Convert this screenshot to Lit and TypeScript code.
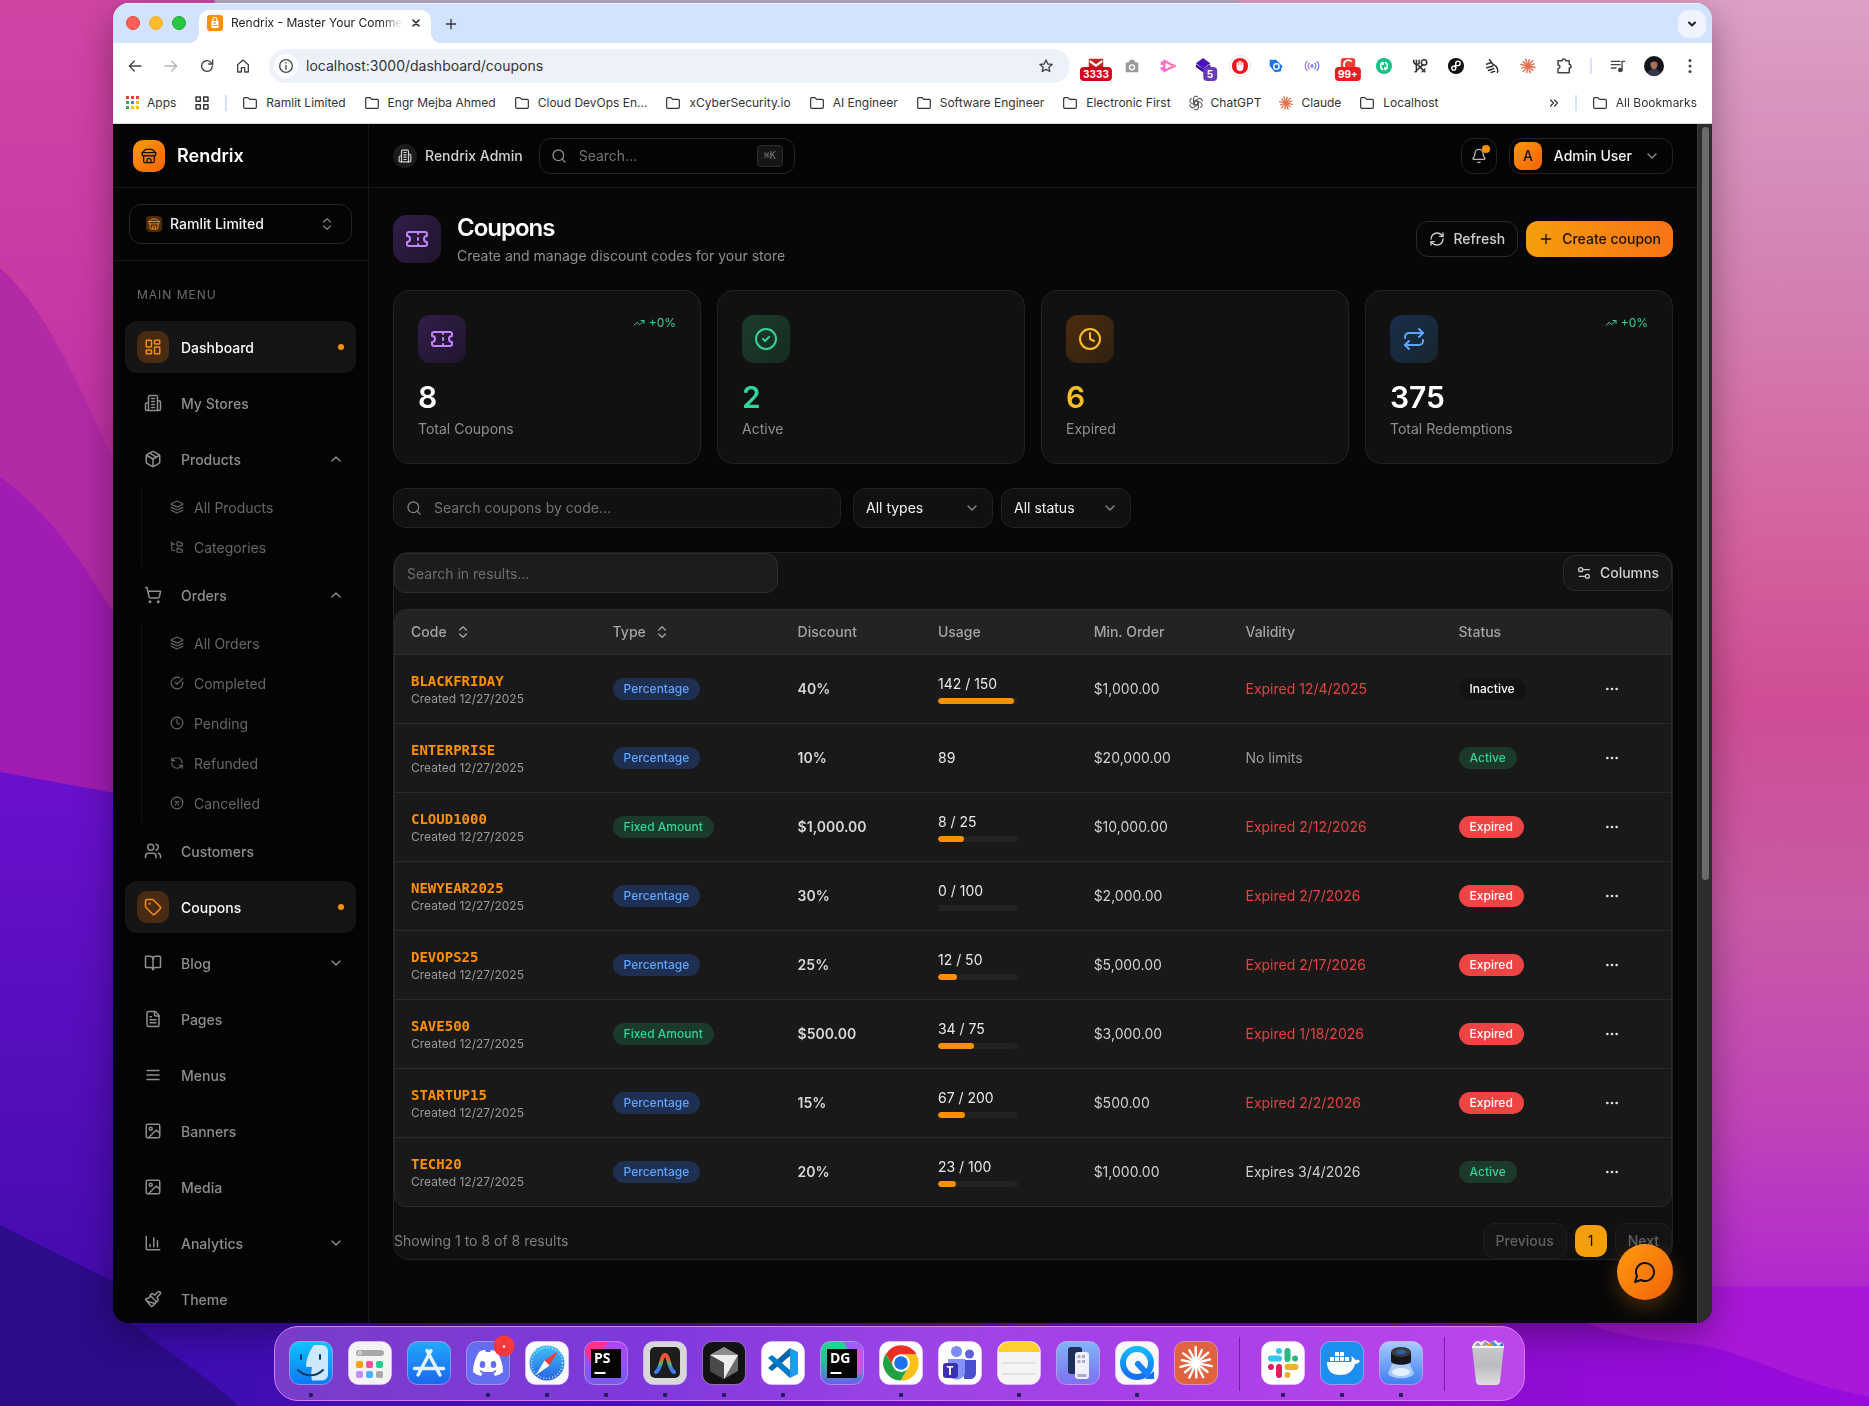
import { LitElement, html, svg, css, nothing } from "lit";
import { customElement, property, state } from "lit/decorators.js";
import { classMap } from "lit/directives/class-map.js";
import { styleMap } from "lit/directives/style-map.js";

/* ---------- line icons (24-unit grid, stroked) ---------- */
const glyphs: Record<string, unknown> = {
  store: svg`<path d="m2 7 4.41-4.41A2 2 0 0 1 7.83 2h8.34a2 2 0 0 1 1.42.59L22 7"/><path d="M4 12v8a2 2 0 0 0 2 2h12a2 2 0 0 0 2-2v-8"/><path d="M15 22v-4a2 2 0 0 0-2-2h-2a2 2 0 0 0-2 2v4"/><path d="M2 7h20"/><path d="M22 7v3a2 2 0 0 1-2 2a2.7 2.7 0 0 1-1.59-.63.7.7 0 0 0-.82 0A2.7 2.7 0 0 1 16 12a2.7 2.7 0 0 1-1.59-.63.7.7 0 0 0-.82 0A2.7 2.7 0 0 1 12 12a2.7 2.7 0 0 1-1.59-.63.7.7 0 0 0-.82 0A2.7 2.7 0 0 1 8 12a2.7 2.7 0 0 1-1.59-.63.7.7 0 0 0-.82 0A2.7 2.7 0 0 1 4 12a2 2 0 0 1-2-2V7"/>`,
  building: svg`<path d="M6 22V4a2 2 0 0 1 2-2h8a2 2 0 0 1 2 2v18Z"/><path d="M6 12H4a2 2 0 0 0-2 2v6a2 2 0 0 0 2 2h2"/><path d="M18 9h2a2 2 0 0 1 2 2v9a2 2 0 0 1-2 2h-2"/><path d="M10 6h4M10 10h4M10 14h4M10 18h4"/>`,
  dashboard: svg`<rect x="3" y="3" width="7" height="9" rx="1"/><rect x="14" y="3" width="7" height="5" rx="1"/><rect x="14" y="12" width="7" height="9" rx="1"/><rect x="3" y="16" width="7" height="5" rx="1"/>`,
  package: svg`<path d="M11 21.73a2 2 0 0 0 2 0l7-4A2 2 0 0 0 21 16V8a2 2 0 0 0-1-1.73l-7-4a2 2 0 0 0-2 0l-7 4A2 2 0 0 0 3 8v8a2 2 0 0 0 1 1.73z"/><path d="M12 22V12"/><path d="M3.29 7 12 12l8.71-5"/><path d="m7.5 4.27 9 5.15"/>`,
  layers: svg`<path d="M12.83 2.18a2 2 0 0 0-1.66 0L2.6 6.08a1 1 0 0 0 0 1.83l8.58 3.91a2 2 0 0 0 1.66 0l8.58-3.9a1 1 0 0 0 0-1.83Z"/><path d="m22 12.65-9.17 4.16a2 2 0 0 1-1.66 0L2 12.65"/><path d="m22 17.65-9.17 4.16a2 2 0 0 1-1.66 0L2 17.65"/>`,
  tree: svg`<path d="M20 10a1 1 0 0 0 1-1V6a1 1 0 0 0-1-1h-2.5a1 1 0 0 1-.8-.4l-.9-1.2A1 1 0 0 0 15 3h-2a1 1 0 0 0-1 1v5a1 1 0 0 0 1 1Z"/><path d="M20 21a1 1 0 0 0 1-1v-3a1 1 0 0 0-1-1h-2.9a1 1 0 0 1-.88-.55l-.42-.85a1 1 0 0 0-.92-.6H13a1 1 0 0 0-1 1v5a1 1 0 0 0 1 1Z"/><path d="M3 5a2 2 0 0 0 2 2h3"/><path d="M3 3v13a2 2 0 0 0 2 2h3"/>`,
  cart: svg`<circle cx="8" cy="21" r="1"/><circle cx="19" cy="21" r="1"/><path d="M2.05 2.05h2l2.66 12.42a2 2 0 0 0 2 1.58h9.78a2 2 0 0 0 1.95-1.57l1.65-7.43H5.12"/>`,
  checkBig: svg`<path d="M21.801 10A10 10 0 1 1 17 3.335"/><path d="m9 11 3 3L22 4"/>`,
  check: svg`<circle cx="12" cy="12" r="10"/><path d="m9 12 2 2 4-4"/>`,
  clock: svg`<circle cx="12" cy="12" r="10"/><path d="M12 6v6l4 2"/>`,
  refreshCcw: svg`<path d="M21 12a9 9 0 0 0-9-9 9.75 9.75 0 0 0-6.74 2.74L3 8"/><path d="M3 3v5h5"/><path d="M3 12a9 9 0 0 0 9 9 9.75 9.75 0 0 0 6.74-2.74L21 16"/><path d="M16 16h5v5"/>`,
  refreshCw: svg`<path d="M3 12a9 9 0 0 1 9-9 9.75 9.75 0 0 1 6.74 2.74L21 8"/><path d="M21 3v5h-5"/><path d="M21 12a9 9 0 0 1-9 9 9.75 9.75 0 0 1-6.74-2.74L3 16"/><path d="M8 16H3v5"/>`,
  circleX: svg`<circle cx="12" cy="12" r="10"/><path d="m15 9-6 6M9 9l6 6"/>`,
  users: svg`<path d="M16 21v-2a4 4 0 0 0-4-4H6a4 4 0 0 0-4 4v2"/><circle cx="9" cy="7" r="4"/><path d="M22 21v-2a4 4 0 0 0-3-3.87"/><path d="M16 3.13a4 4 0 0 1 0 7.75"/>`,
  tag: svg`<path d="M12.586 2.586A2 2 0 0 0 11.172 2H4a2 2 0 0 0-2 2v7.172a2 2 0 0 0 .586 1.414l8.704 8.704a2.426 2.426 0 0 0 3.42 0l6.58-6.58a2.426 2.426 0 0 0 0-3.42z"/><circle cx="7.5" cy="7.5" r=".5" fill="currentColor"/>`,
  book: svg`<path d="M12 7v14"/><path d="M3 18a1 1 0 0 1-1-1V4a1 1 0 0 1 1-1h5a4 4 0 0 1 4 4 4 4 0 0 1 4-4h5a1 1 0 0 1 1 1v13a1 1 0 0 1-1 1h-6a3 3 0 0 0-3 3 3 3 0 0 0-3-3z"/>`,
  file: svg`<path d="M15 2H6a2 2 0 0 0-2 2v16a2 2 0 0 0 2 2h12a2 2 0 0 0 2-2V7Z"/><path d="M14 2v4a2 2 0 0 0 2 2h4"/><path d="M10 9H8M16 13H8M16 17H8"/>`,
  menu: svg`<path d="M4 6h16M4 12h16M4 18h16"/>`,
  image: svg`<rect x="3" y="3" width="18" height="18" rx="2"/><circle cx="9" cy="9" r="2"/><path d="m21 15-3.086-3.086a2 2 0 0 0-2.828 0L6 21"/>`,
  chart: svg`<path d="M3 3v16a2 2 0 0 0 2 2h16"/><path d="M18 17V9M13 17V5M8 17v-3"/>`,
  brush: svg`<path d="m14.622 17.897-10.68-2.913"/><path d="M18.376 2.622a1 1 0 1 1 3.002 3.002L17.36 9.643a.5.5 0 0 0 0 .707l.944.944a2.41 2.41 0 0 1 0 3.408l-.944.944a.5.5 0 0 1-.707 0L8.354 7.348a.5.5 0 0 1 0-.707l.944-.944a2.41 2.41 0 0 1 3.408 0l.944.944a.5.5 0 0 0 .707 0z"/><path d="M9 8c-1.804 2.71-3.97 3.46-6.583 3.948a.507.507 0 0 0-.302.819l7.32 8.883a1 1 0 0 0 1.185.204C12.735 20.405 16 16.792 16 15"/>`,
  ticket: svg`<path d="M2 9a3 3 0 0 1 0 6v2a2 2 0 0 0 2 2h16a2 2 0 0 0 2-2v-2a3 3 0 0 1 0-6V7a2 2 0 0 0-2-2H4a2 2 0 0 0-2 2Z"/><path d="M13 5v2M13 17v2M13 11v2"/>`,
  repeat: svg`<path d="m17 2 4 4-4 4"/><path d="M3 11v-1a4 4 0 0 1 4-4h14"/><path d="m7 22-4-4 4-4"/><path d="M21 13v1a4 4 0 0 1-4 4H3"/>`,
  trend: svg`<path d="M16 7h6v6"/><path d="m22 7-8.5 8.5-5-5L2 17"/>`,
  search: svg`<circle cx="11" cy="11" r="8"/><path d="m21 21-4.3-4.3"/>`,
  bell: svg`<path d="M10.268 21a2 2 0 0 0 3.464 0"/><path d="M3.262 15.326A1 1 0 0 0 4 17h16a1 1 0 0 0 .74-1.673C19.41 13.956 18 12.499 18 8A6 6 0 0 0 6 8c0 4.499-1.411 5.956-2.738 7.326"/>`,
  columns: svg`<path d="M20 7h-9M14 17H5"/><circle cx="17" cy="17" r="3"/><circle cx="7" cy="7" r="3"/>`,
  message: svg`<path d="M7.9 20A9 9 0 1 0 4 16.1L2 22Z"/>`,
  dots: svg`<circle cx="12" cy="12" r="1"/><circle cx="19" cy="12" r="1"/><circle cx="5" cy="12" r="1"/>`,
  sort: svg`<path d="m7 15 5 5 5-5M7 9l5-5 5 5"/>`,
  down: svg`<path d="m6 9 6 6 6-6"/>`,
  up: svg`<path d="m18 15-6-6-6 6"/>`,
  plus: svg`<path d="M5 12h14M12 5v14"/>`,
  close: svg`<path d="M6 6l12 12M18 6 6 18"/>`,
  back: svg`<path d="M21 12H4M11 4.5 3.5 12l7.5 7.5"/>`,
  forward: svg`<path d="M3 12h17M13 4.5 20.5 12 13 19.5"/>`,
  reload: svg`<path d="M20 12a8 8 0 1 1-2.5-5.8L20.5 9"/><path d="M20.5 3v6h-6"/>`,
  home: svg`<path d="M4 21V10l8-7 8 7v11h-5.5v-6.5h-5V21Z"/>`,
  info: svg`<circle cx="12" cy="12" r="9.5"/><path d="M12 11v6M12 7v.5"/>`,
  star: svg`<path d="m12 3 2.7 6 6.5.6-4.9 4.3 1.5 6.4L12 17l-5.8 3.3 1.5-6.4-4.9-4.3 6.5-.6Z"/>`,
  folder: svg`<path d="M2.5 5.5a1.5 1.5 0 0 1 1.5-1.5h5l2.5 2.5H20A1.5 1.5 0 0 1 21.5 8v10.5A1.5 1.5 0 0 1 20 20H4a1.5 1.5 0 0 1-1.5-1.5Z"/>`,
  puzzle: svg`<path d="M4 5h5.500a2.300 2.300 0 0 1 4.600 0H19v5a2.400 2.400 0 0 1 0 4.800V21H4v-5.500a2.500 2.500 0 0 0 0-5Z"/>`,
  tiles: svg`<rect x="3" y="3" width="6.5" height="6.5"/><rect x="14.5" y="3" width="6.5" height="6.5"/><rect x="3" y="14.5" width="6.5" height="6.5"/><rect x="14.5" y="14.5" width="6.5" height="6.5"/>`,
  more: svg`<path d="m5 6 6 6-6 6M13 6l6 6-6 6"/>`,
  playlist: svg`<path d="M2 5h13M2 10h13M2 15h7"/><circle cx="15.5" cy="18" r="2.5" fill="currentColor"/><path d="M18 18V5h4"/>`,
};

const icon = (name: string, size = 16, weight = 2) =>
  html`<svg width=${size} height=${size} viewBox="0 0 24 24" fill="none" stroke="currentColor" stroke-width=${weight} stroke-linecap="round" stroke-linejoin="round" aria-hidden="true">${glyphs[name]}</svg>`;

const burst = (color: string, rays: number, cx: number, cy: number, inner: number, outer: number, weight: number) =>
  svg`<g stroke=${color} stroke-width=${weight} stroke-linecap="round">${Array.from({ length: rays }, (_, i) => {
    const a = (i / rays) * Math.PI * 2 + 0.2;
    const r = outer * (i % 2 ? 0.9 : 1);
    return svg`<line x1=${cx + Math.cos(a) * inner} y1=${cy + Math.sin(a) * inner} x2=${cx + Math.cos(a) * r} y2=${cy + Math.sin(a) * r} />`;
  })}</g>`;

/* ---------- browser extensions ---------- */
interface Extension { label: string; art: unknown; badge?: string; tone?: string; }
const extensions: Extension[] = [
  { label: "Mail", badge: "3333", tone: "crimson", art: svg`<path d="M2 2h16v14H2z" fill="#c5221f"/><path d="M3 3l7 5 7-5v3l-7 5-7-5z" fill="#fff"/>` },
  { label: "Camera", art: svg`<path d="M3 6h3l2-3h4l2 3h3v11H3z" fill="#9a9a9a"/><circle cx="10" cy="11.5" r="3.5" fill="#fff"/><circle cx="10" cy="11.5" r="2" fill="#9a9a9a"/>` },
  { label: "Recorder", art: svg`<path d="M6 4.5 17 10 6 15.5z" fill="none" stroke="#ff6ec7" stroke-width="2.5"/><path d="M2 5h4v4H2zM2 11h4v4H2z" fill="#ff6ec7"/><circle cx="17" cy="10" r="2" fill="#f9a"/>` },
  { label: "Stack", badge: "5", tone: "violet", art: svg`<path d="m9 1 8 6-8 6-8-6z" fill="#4a12b8"/><path d="m1 11 8 6 8-6v-3l-8 5-8-5z" fill="#3a0ca3"/>` },
  { label: "Blocker", art: svg`<circle cx="10" cy="10" r="12" fill="#fff" stroke="#e4e4e4"/><circle cx="10" cy="10" r="9" fill="#f2131c"/><path d="M7 10V6.5M9 9V5M11 9V5M13 10V6.5" stroke="#fff" stroke-width="1.5" stroke-linecap="round"/><path d="M6.3 9h7.4v3a3.6 3.6 0 0 1-7.4 0z" fill="#fff"/>` },
  { label: "Price tag", art: svg`<path d="M3 3h7l7 7-2 6-6 1-6-7z" fill="#1a73e8"/><circle cx="10.5" cy="10.5" r="3" fill="none" stroke="#fff" stroke-width="1.5"/>` },
  { label: "Broadcast", art: svg`<g fill="none" stroke-width="1.3" stroke-linecap="round"><circle cx="10" cy="10" r="1.2" stroke="#7a6ae8"/><path d="M7 13a4 4 0 0 1 0-6M4.500 15a7 7 0 0 1 0-10" stroke="#b06be8"/><path d="M13 7a4 4 0 0 1 0 6M15.500 5a7 7 0 0 1 0 10" stroke="#5c7cf0"/></g>` },
  { label: "Grades", badge: "99+", tone: "red", art: svg`<rect x="2" y="1" width="16" height="16" rx="3" fill="#ea4335"/><path d="M14 5a5 5 0 1 0 0 7" stroke="#fff" stroke-width="2" fill="none"/>` },
  { label: "Sync", art: svg`<circle cx="10" cy="10" r="9" fill="#15c485"/><path d="M9 14.5 6.5 12V8L9 5.5M11 5.5 13.5 8v4L11 14.5M9 5.5V9M11 14.5V11" stroke="#fff" stroke-width="1.8" fill="none"/>` },
  { label: "Tools", art: svg`<g fill="none" stroke="#333" stroke-width="1.7"><path d="M3 3v3l3 3v8M6 3v5M9 3v4L6 9M4 17l10-9"/><circle cx="14.500" cy="6" r="3"/><path d="m8 9 8 8M12 17l4-4"/></g>` },
  { label: "Link", art: svg`<circle cx="10" cy="10" r="9" fill="#111"/><circle cx="7.5" cy="12.5" r="2.2" stroke="#fff" stroke-width="1.5" fill="none"/><path d="M9.7 12.5V7a2.5 2.5 0 1 1 2.5 2.5H8" stroke="#fff" stroke-width="1.5" fill="none"/>` },
  { label: "Hand", art: svg`<path d="M7 3c2 1 2 4 4 5s4 2 5 5 0 4 0 4M4 8l6-2M4 12l7-2M6 15l6-2M9 17l4-1" stroke="#222" stroke-width="1.5" fill="none" stroke-linecap="round"/>` },
  { label: "Claude", art: burst("#e2704c", 12, 10, 10, 1, 8, 1.6) },
];

const openaiMark = svg`<g fill="none" stroke="#555" stroke-width="1.2">${[0, 60, 120, 180, 240, 300].map(
  (a) => svg`<path d="M5.200 4V2.800a2.800 2.800 0 0 1 5-1.400M5.200 4v4.500L8 10" transform="rotate(${a} 8 8)"/>`)}</g>`;

interface Bookmark { text: string; kind: "folder" | "openai" | "claude"; }
const bookmarks: Bookmark[] = [
  { text: "Ramlit Limited", kind: "folder" },
  { text: "Engr Mejba Ahmed", kind: "folder" },
  { text: "Cloud DevOps En...", kind: "folder" },
  { text: "xCyberSecurity.io", kind: "folder" },
  { text: "AI Engineer", kind: "folder" },
  { text: "Software Engineer", kind: "folder" },
  { text: "Electronic First", kind: "folder" },
  { text: "ChatGPT", kind: "openai" },
  { text: "Claude", kind: "claude" },
  { text: "Localhost", kind: "folder" },
];

@customElement("browser-chrome")
export class BrowserChrome extends LitElement {
  static styles = css`
    :host { display: block; background: #fff; color: #333; font-family: Inter, "Liberation Sans", sans-serif; font-size: 12px; }
    * { box-sizing: border-box; }
    button { border: 0; background: none; padding: 0; font: inherit; color: inherit; display: grid; place-items: center; }
    a { color: inherit; text-decoration: none; }
    svg { display: block; flex: none; overflow: visible; }
    .strip { display: flex; align-items: stretch; height: 40px; padding: 6px 6px 0 13px; background: #d3e2fd; border-top: 1px solid #eef4ff; }
    .lights { display: flex; align-items: center; gap: 9px; padding-bottom: 7px; margin-right: 13px; }
    .light { width: 14px; height: 14px; border-radius: 50%; border: 1px solid #e0443e; background: #ff5f57; }
    .light.min { background: #febc2e; border-color: #f0b020; }
    .light.max { background: #28c840; border-color: #1aab2f; }
    .tab { position: relative; display: flex; align-items: center; gap: 8px; width: 232px; padding: 0 10px 7px 8px; background: #fff; border-radius: 10px 10px 0 0; color: #222; }
    .tab::before, .tab::after { content: ""; position: absolute; bottom: 0; width: 10px; height: 10px; }
    .tab::before { left: -10px; background: radial-gradient(circle at 0 0, transparent 10px, #fff 10px); }
    .tab::after { right: -10px; background: radial-gradient(circle at 100% 0, transparent 10px, #fff 10px); }
    .name { flex: 1; white-space: nowrap; line-height: 16px; mask-image: linear-gradient(90deg, #000 88%, transparent); }
    .newtab { width: 40px; padding-bottom: 6px; }
    .spacer { flex: 1; }
    .tabs-menu { align-self: flex-start; width: 28px; height: 28px; border-radius: 10px; background: #eef3fd; color: #222; }
    .bar { display: flex; align-items: center; height: 46px; padding: 0 4px; color: #444; }
    .tool { width: 36px; height: 34px; position: relative; flex: none; }
    .dim { color: #b5b5b5; }
    .omni { display: flex; align-items: center; gap: 8px; flex: 1; min-width: 0; height: 34px; margin: 0 8px; padding: 0 16px 0 5px; border-radius: 17px; background: #edf1fa; }
    .site { width: 24px; height: 24px; border-radius: 50%; background: #fff; }
    .omni input { flex: 1; min-width: 0; border: 0; outline: 0; background: none; font: 14px/20px Inter, sans-serif; color: #333; padding: 0; }
    .rule { width: 2px; height: 16px; margin: 0 8px; background: #d3e2fd; flex: none; }
    .count { position: absolute; right: 50%; bottom: 2px; transform: translateX(50%); padding: 0 3px; border-radius: 4px; color: #fff; font-weight: 700; font-size: 10px; line-height: 14px; background: #d0021b; }
    .count.violet { padding: 0 4px; background: #673ab7; right: 12px; }
    .count.red { background: #f0191f; }
    .marks { display: flex; align-items: center; gap: 18px; height: 35px; padding: 0 15px 7px 13px; border-bottom: 1px solid #d8d8d8; white-space: nowrap; }
    .mark { display: flex; align-items: center; gap: 8px; line-height: 16px; }
    .marks .rule { margin: 0 -3px; }
  `;

  private ext(e: Extension) {
    return html`<button class="tool" aria-label=${e.label}>
      <svg width="18" height="18" viewBox="0 0 20 20" aria-hidden="true">${e.art}</svg>
      ${e.badge ? html`<span class=${classMap({ count: true, [e.tone ?? ""]: true })}>${e.badge}</span>` : nothing}
    </button>`;
  }

  private markIcon(kind: Bookmark["kind"]) {
    if (kind === "folder") return icon("folder", 16, 1.8);
    return html`<svg width="14" height="14" viewBox="0 0 16 16" aria-hidden="true">${kind === "openai" ? openaiMark : burst("#e2704c", 12, 8, 8, 1, 7.5, 1.5)}</svg>`;
  }

  render() {
    const colors = ["#ea4335", "#ea4335", "#ea4335", "#34a853", "#4285f4", "#fbbc04", "#34a853", "#fbbc04", "#fbbc04"];
    return html`
      <div class="strip">
        <div class="lights"><span class="light"></span><span class="light min"></span><span class="light max"></span></div>
        <div class="tab">
          <svg width="16" height="16" viewBox="0 0 16 16" aria-hidden="true"><rect width="16" height="16" rx="3" fill="#ff9000"/><path d="M4.5 6h7v7h-7z" fill="#fff"/><path d="M6 6V4.5a2 2 0 0 1 4 0V6" stroke="#fff" stroke-width="1.2" fill="none"/><path d="M6 8h3M6 10.5h4" stroke="#ff9000"/></svg>
          <span class="name">Rendrix - Master Your Comme</span>
          <button aria-label="Close tab">${icon("close", 12, 3)}</button>
        </div>
        <button class="newtab" aria-label="New tab">${icon("plus", 16, 2)}</button>
        <span class="spacer"></span>
        <button class="tabs-menu" aria-label="Search tabs">${icon("down", 12, 4)}</button>
      </div>
      <div class="bar">
        <button class="tool" aria-label="Back">${icon("back", 16)}</button>
        <button class="tool dim" aria-label="Forward">${icon("forward", 16)}</button>
        <button class="tool" aria-label="Reload">${icon("reload", 16)}</button>
        <button class="tool" aria-label="Home">${icon("home", 16)}</button>
        <div class="omni">
          <button class="site" aria-label="Site information">${icon("info", 16)}</button>
          <input aria-label="Address" .value=${"localhost:3000/dashboard/coupons"} />
          <button aria-label="Bookmark this page">${icon("star", 16)}</button>
        </div>
        ${extensions.map((e) => this.ext(e))}
        <button class="tool" aria-label="Extensions">${icon("puzzle", 18)}</button>
        <span class="rule"></span>
        <button class="tool" aria-label="Media">${icon("playlist", 16)}</button>
        <button class="tool" aria-label="Profile">
          <svg width="20" height="20" viewBox="0 0 20 20" aria-hidden="true"><circle cx="10" cy="10" r="10" fill="#15131c"/><path d="M4 18c0-4 3-5 6-5s6 1 6 5a10 10 0 0 1-12 0z" fill="#38374a"/><ellipse cx="10" cy="8.5" rx="3.5" ry="4.8" fill="#a8705c"/><path d="M6.5 7c0-5 7-5 7 0-2-2-5-2-7 0z" fill="#120c10"/></svg>
        </button>
        <button class="tool" aria-label="Browser menu"><svg width="16" height="16" viewBox="0 0 16 16" fill="#444"><circle cx="8" cy="2.5" r="1.5"/><circle cx="8" cy="8" r="1.5"/><circle cx="8" cy="13.5" r="1.5"/></svg></button>
      </div>
      <nav class="marks" aria-label="Bookmarks">
        <a class="mark" href="#apps"><svg width="13" height="13" viewBox="0 0 13 13">${colors.map((c, i) => svg`<rect x=${(i % 3) * 5} y=${Math.floor(i / 3) * 5} width="3" height="3" fill=${c} />`)}</svg>Apps</a>
        <button aria-label="Tab groups">${icon("tiles", 16, 2.2)}</button>
        <span class="rule"></span>
        ${bookmarks.map((b) => html`<a class="mark" href="#bookmark">${this.markIcon(b.kind)}${b.text}</a>`)}
        <span class="spacer"></span>
        <button aria-label="More bookmarks">${icon("more", 12, 2.4)}</button>
        <span class="rule"></span>
        <a class="mark" href="#all">${icon("folder", 16, 1.8)}All Bookmarks</a>
      </nav>`;
  }
}

/* ---------- sidebar ---------- */
interface NavItem { text: string; icon: string; active?: boolean; open?: boolean; expandable?: boolean; children?: { text: string; icon: string }[]; }
const navItems: NavItem[] = [
  { text: "Dashboard", icon: "dashboard", active: true },
  { text: "My Stores", icon: "building" },
  { text: "Products", icon: "package", expandable: true, open: true, children: [{ text: "All Products", icon: "layers" }, { text: "Categories", icon: "tree" }] },
  { text: "Orders", icon: "cart", expandable: true, open: true, children: [
    { text: "All Orders", icon: "layers" }, { text: "Completed", icon: "checkBig" }, { text: "Pending", icon: "clock" },
    { text: "Refunded", icon: "refreshCcw" }, { text: "Cancelled", icon: "circleX" }] },
  { text: "Customers", icon: "users" },
  { text: "Coupons", icon: "tag", active: true },
  { text: "Blog", icon: "book", expandable: true },
  { text: "Pages", icon: "file" },
  { text: "Menus", icon: "menu" },
  { text: "Banners", icon: "image" },
  { text: "Media", icon: "image" },
  { text: "Analytics", icon: "chart", expandable: true },
  { text: "Theme", icon: "brush" },
];

@customElement("app-sidebar")
export class AppSidebar extends LitElement {
  static styles = css`
    :host { display: flex; flex-direction: column; width: 256px; flex: none; overflow: hidden; background: #040404; border-right: 1px solid #161616; font-family: Inter, "Liberation Sans", sans-serif; }
    * { box-sizing: border-box; }
    a { color: inherit; text-decoration: none; }
    svg { display: block; flex: none; }
    .brand { display: flex; align-items: center; gap: 12px; flex: none; height: 64px; padding: 0 20px; border-bottom: 1px solid #161616; color: #fff; font-size: 18px; font-weight: 600; }
    .logo { display: grid; place-items: center; width: 32px; height: 32px; border-radius: 10px; color: #111; background: linear-gradient(135deg, #ff9a10, #f26207); }
    .org { flex: none; padding: 16px; border-bottom: 1px solid #161616; }
    .switch { display: flex; align-items: center; gap: 8px; width: 100%; height: 40px; padding: 0 16px; border: 1px solid #262626; border-radius: 12px; background: none; color: #f2f2f2; font: 500 14px/20px Inter, sans-serif; text-align: left; }
    .switch span:nth-child(2) { flex: 1; }
    .chip { display: grid; place-items: center; width: 16px; height: 16px; border-radius: 4px; background: #4a2a0a; color: #f08a10; }
    .muted { color: #7c7c7c; }
    nav { display: flex; flex-direction: column; gap: 4px; padding: 26px 12px 0; }
    h2 { margin: 0 12px 14px; font-size: 12px; line-height: 16px; font-weight: 400; letter-spacing: 1px; text-transform: uppercase; color: #6c6c6c; }
    .item { display: flex; align-items: center; gap: 12px; flex: none; height: 52px; padding: 0 12px; border-radius: 12px; color: #8e8e8e; font-size: 14px; font-weight: 500; }
    .item .text { flex: 1; }
    .box { display: grid; place-items: center; width: 32px; height: 32px; border-radius: 10px; }
    .item.active { background: #151515; color: #fafafa; }
    .item.active .box { background: #4a2b12; color: #f5900c; }
    .dot { width: 6px; height: 6px; border-radius: 50%; background: #ff9000; }
    .group { display: flex; flex-direction: column; gap: 4px; margin-left: 16px; padding-left: 12px; border-left: 1px solid #121212; }
    .sub { display: flex; align-items: center; gap: 10px; height: 36px; padding: 0 16px; color: #676767; font-size: 14px; }
  `;
  render() {
    return html`
      <div class="brand"><span class="logo">${icon("store", 16)}</span>Rendrix</div>
      <div class="org"><button class="switch"><span class="chip">${icon("store", 12)}</span><span>Ramlit Limited</span><span class="muted">${icon("sort", 16)}</span></button></div>
      <nav aria-label="Main menu">
        <h2>Main menu</h2>
        ${navItems.map((n) => html`
          <a class=${classMap({ item: true, active: !!n.active })} href="#${n.text.toLowerCase()}">
            <span class="box">${icon(n.icon, 18)}</span><span class="text">${n.text}</span>
            ${n.active ? html`<span class="dot"></span>` : n.expandable ? icon(n.open ? "up" : "down", 16) : nothing}
          </a>
          ${n.children ? html`<div class="group">${n.children.map((c) => html`<a class="sub" href="#sub">${icon(c.icon, 14)}<span>${c.text}</span></a>`)}</div>` : nothing}`)}
      </nav>`;
  }
}

/* ---------- coupons page ---------- */
interface Stat { value: string; label: string; icon: string; tone: string; trend?: string; }
const stats: Stat[] = [
  { value: "8", label: "Total Coupons", icon: "ticket", tone: "purple", trend: "+0%" },
  { value: "2", label: "Active", icon: "check", tone: "green" },
  { value: "6", label: "Expired", icon: "clock", tone: "amber" },
  { value: "375", label: "Total Redemptions", icon: "repeat", tone: "blue", trend: "+0%" },
];

interface Coupon { code: string; type: "Percentage" | "Fixed Amount"; discount: string; used: number; limit?: number; min: string; validity: string; status: "Inactive" | "Active" | "Expired"; }
const coupons: Coupon[] = [
  { code: "BLACKFRIDAY", type: "Percentage", discount: "40%", used: 142, limit: 150, min: "$1,000.00", validity: "Expired 12/4/2025", status: "Inactive" },
  { code: "ENTERPRISE", type: "Percentage", discount: "10%", used: 89, min: "$20,000.00", validity: "No limits", status: "Active" },
  { code: "CLOUD1000", type: "Fixed Amount", discount: "$1,000.00", used: 8, limit: 25, min: "$10,000.00", validity: "Expired 2/12/2026", status: "Expired" },
  { code: "NEWYEAR2025", type: "Percentage", discount: "30%", used: 0, limit: 100, min: "$2,000.00", validity: "Expired 2/7/2026", status: "Expired" },
  { code: "DEVOPS25", type: "Percentage", discount: "25%", used: 12, limit: 50, min: "$5,000.00", validity: "Expired 2/17/2026", status: "Expired" },
  { code: "SAVE500", type: "Fixed Amount", discount: "$500.00", used: 34, limit: 75, min: "$3,000.00", validity: "Expired 1/18/2026", status: "Expired" },
  { code: "STARTUP15", type: "Percentage", discount: "15%", used: 67, limit: 200, min: "$500.00", validity: "Expired 2/2/2026", status: "Expired" },
  { code: "TECH20", type: "Percentage", discount: "20%", used: 23, limit: 100, min: "$1,000.00", validity: "Expires 3/4/2026", status: "Active" },
];

@customElement("coupons-page")
export class CouponsPage extends LitElement {
  @property({ type: String }) org = "Rendrix Admin";
  @state() private query = "";

  static styles = css`
    :host { display: flex; flex-direction: column; flex: 1; min-width: 0; position: relative; background: #070707; color: #e8e8e8; font-family: Inter, "Liberation Sans", sans-serif; font-size: 14px; line-height: 20px; }
    * { box-sizing: border-box; }
    button, input, select { font: inherit; color: inherit; }
    button { display: flex; align-items: center; padding: 0; background: none; border: 0; white-space: nowrap; }
    input { min-width: 0; border: 0; outline: 0; background: none; padding: 0; }
    input::placeholder { color: #757575; opacity: 1; }
    svg { display: block; flex: none; }
    .top { display: flex; align-items: center; flex: none; height: 64px; padding: 0 24px; border-bottom: 1px solid #161616; background: #040404; }
    .who { display: flex; align-items: center; gap: 8px; margin-right: 16px; color: #d2d2d2; font-weight: 500; }
    .who span { display: grid; place-items: center; width: 24px; height: 24px; border-radius: 50%; background: #1b1b1b; }
    .find { display: flex; align-items: center; gap: 12px; width: 256px; height: 36px; padding: 0 11px; border: 1px solid #262626; border-radius: 12px; color: #8a8a8a; }
    .find input { flex: 1; }
    kbd { padding: 0 6px; border: 1px solid #2c2c2c; border-radius: 4px; background: #161616; color: #777; font: 10px/20px "DejaVu Sans Mono", "Liberation Mono", monospace; }
    .push { flex: 1; }
    .bell { position: relative; justify-content: center; width: 36px; height: 36px; margin-right: 12px; border: 1px solid #222; border-radius: 12px; color: #b8b8b8; }
    .bell i { position: absolute; top: 6px; right: 6px; width: 8px; height: 8px; border-radius: 50%; background: #ff9000; }
    .me { gap: 12px; height: 36px; padding: 0 12px 0 4px; border: 1px solid #222; border-radius: 12px; color: #f5f5f5; font-weight: 500; }
    .me b { display: grid; place-items: center; width: 28px; height: 28px; border-radius: 8px; color: #111; font-weight: 500; background: linear-gradient(135deg, #ff960f, #f26207); }
    .me svg { color: #888; }
    .body { display: flex; flex-direction: column; gap: 24px; padding: 24px; }
    .head { display: flex; align-items: center; gap: 8px; height: 54px; }
    .tile { display: grid; place-items: center; width: 48px; height: 48px; border-radius: 12px; }
    .head .tile { margin-right: 8px; border-radius: 14px; }
    .purple { color: #c084fc; background: linear-gradient(135deg, #311d47, #20152e); }
    .green { color: #34d399; background: linear-gradient(135deg, #1c3d2c, #172a20); }
    .amber { color: #fbbf24; background: linear-gradient(135deg, #4d2c0e, #2e2112); }
    .blue { color: #60a5fa; background: linear-gradient(135deg, #1a2d4c, #16262c); }
    h1 { margin: 0; color: #fff; font-size: 24px; line-height: 32px; font-weight: 600; letter-spacing: -1px; }
    .sub { margin: 2px 0 0; color: #8f8f8f; }
    .btn { gap: 8px; height: 36px; padding: 0 12px; border: 1px solid #2a2a2a; border-radius: 12px; color: #d0d0d0; font-weight: 500; }
    .btn.primary { border: 0; color: #1a1208; background: linear-gradient(90deg, #f59e0b, #f97316); }
    .stats { display: grid; grid-template-columns: repeat(4, 1fr); gap: 16px; }
    .stat { display: grid; grid-template-columns: 1fr auto; padding: 24px; border: 1px solid #222; border-radius: 16px; background: #111; }
    .stat .tile { border-radius: 12px; margin-bottom: 16px; }
    .trend { display: flex; align-items: center; gap: 4px; height: 16px; color: #34d399; font-size: 12px; }
    .num { grid-column: 1 / -1; margin-bottom: 4px; font-size: 30px; line-height: 36px; font-weight: 600; color: #fff; }
    .num.green { color: #34d399; background: none; }
    .num.amber { color: #fbbf24; background: none; }
    .cap { grid-column: 1 / -1; color: #8f8f8f; }
    .filters { display: flex; gap: 8px; }
    .query { display: flex; align-items: center; gap: 12px; flex: 0 1 448px; height: 40px; margin-right: 4px; padding: 0 12px; border: 1px solid #222; border-radius: 12px; background: #111; color: #808080; }
    .query input { flex: 1; color: #ddd; }
    .pick { display: grid; align-items: center; width: 140px; color: #8a8a8a; }
    .pick.narrow { width: 130px; }
    .pick > * { grid-area: 1 / 1; }
    .pick svg { justify-self: end; margin-right: 13px; pointer-events: none; }
    select { appearance: none; height: 40px; padding: 0 12px; border: 1px solid #222; border-radius: 12px; background: #111; color: #f2f2f2; }
    .panel { display: flex; flex-direction: column; gap: 16px; border: 1px solid #222; border-radius: 16px; background: #111; }
    .tools { display: flex; align-items: center; justify-content: space-between; }
    .inner { width: 384px; height: 40px; padding: 0 12px; border: 1px solid #2e2e2e; border-radius: 12px; background: #1c1c1c; }
    .inner::placeholder { color: #6e6e6e; }
    .tools .btn { background: #161616; }
    .sheet { overflow: hidden; border: 1px solid #2a2a2a; border-radius: 12px; background: #191919; }
    table { width: 100%; table-layout: fixed; border-collapse: separate; border-spacing: 0; text-align: left; }
    .c1 { width: 15.8%; } .c2 { width: 14.5%; } .c3 { width: 11%; } .c4 { width: 12.2%; } .c5 { width: 11.9%; } .c6 { width: 16.7%; } .c7 { width: 10.8%; }
    th { height: 45px; padding: 0 16px; border-bottom: 1px solid #2c2c2c; background: #232323; color: #a3a3a3; font-weight: 500; white-space: nowrap; }
    th button { gap: 8px; font-weight: 500; }
    td { height: 69px; padding: 0 16px; border-bottom: 1px solid #2a2a2a; white-space: nowrap; }
    tr:last-child td { height: 68px; border-bottom: 0; }
    .code { color: #ff9000; font: 700 14px/20px "DejaVu Sans Mono", "Liberation Mono", monospace; }
    .made { color: #999; font-size: 12px; line-height: 16px; }
    .pill { display: inline-block; padding: 3px 11px; border-radius: 11px; font-size: 12px; line-height: 16px; font-weight: 500; vertical-align: middle; }
    .pill.pct { background: #1f2f52; color: #60a5fa; }
    .pill.fix, .pill.on { background: #1c3a2c; color: #34d399; }
    .pill.off { background: #131313; color: #fafafa; }
    .pill.exp { background: #ef4444; color: #fff; }
    .strong { font-weight: 600; color: #d8d8d8; }
    .soft { color: #cfcfcf; }
    .quiet { color: #9a9a9a; }
    .bad { color: #e5423f; }
    .track { width: 80px; height: 6px; margin-top: 4px; border-radius: 3px; background: #222; overflow: hidden; }
    .fill { height: 6px; border-radius: 3px; background: #ff9000; }
    .act { justify-content: center; width: 32px; height: 32px; color: #e0e0e0; }
    .pager { display: flex; align-items: center; gap: 8px; color: #7f7f7f; }
    .pager .btn { background: #141414; border-color: #202020; color: #606060; }
    .page { justify-content: center; width: 32px; height: 32px; border-radius: 10px; background: #f59e0b; color: #111; }
    .chat { position: absolute; right: 24px; bottom: 23px; justify-content: center; width: 56px; height: 56px; border-radius: 50%; color: #111; background: linear-gradient(135deg, #ff9a10, #f26207); box-shadow: 0 8px 20px rgba(249, 140, 22, 0.25); }
  `;

  private row(c: Coupon) {
    const tone = { Inactive: "off", Active: "on", Expired: "exp" }[c.status];
    const validity = c.validity.startsWith("Expired") ? "bad" : c.validity.startsWith("Expires") ? "soft" : "quiet";
    return html`<tr>
      <td><div class="code">${c.code}</div><div class="made">Created 12/27/2025</div></td>
      <td><span class="pill ${c.type === "Percentage" ? "pct" : "fix"}">${c.type}</span></td>
      <td class="strong">${c.discount}</td>
      <td><div>${c.limit ? `${c.used} / ${c.limit}` : c.used}</div>
        ${c.limit ? html`<div class="track"><div class="fill" style=${styleMap({ width: `${(c.used / c.limit) * 100}%` })}></div></div>` : nothing}</td>
      <td class="soft">${c.min}</td>
      <td class=${validity}>${c.validity}</td>
      <td><span class="pill ${tone}">${c.status}</span></td>
      <td><button class="act" aria-label="Actions for ${c.code}">${icon("dots", 16)}</button></td>
    </tr>`;
  }

  render() {
    const rows = coupons.filter((c) => c.code.includes(this.query.toUpperCase()));
    return html`
      <header class="top">
        <div class="who"><span>${icon("building", 14)}</span>${this.org}</div>
        <label class="find">${icon("search", 16)}<input aria-label="Search" placeholder="Search..." /><kbd>⌘K</kbd></label>
        <span class="push"></span>
        <button class="bell" aria-label="Notifications">${icon("bell", 16)}<i></i></button>
        <button class="me"><b>A</b>Admin User ${icon("down", 16)}</button>
      </header>
      <main class="body">
        <div class="head">
          <div class="tile purple">${icon("ticket", 24)}</div>
          <div><h1>Coupons</h1><p class="sub">Create and manage discount codes for your store</p></div>
          <span class="push"></span>
          <button class="btn">${icon("refreshCw", 16)}Refresh</button>
          <button class="btn primary">${icon("plus", 16)}Create coupon</button>
        </div>
        <section class="stats" aria-label="Summary">
          ${stats.map((s) => html`<div class="stat">
            <div class="tile ${s.tone}">${icon(s.icon, 24)}</div>
            <div>${s.trend ? html`<span class="trend">${icon("trend", 12)}${s.trend}</span>` : nothing}</div>
            <div class="num ${s.tone === "green" || s.tone === "amber" ? s.tone : ""}">${s.value}</div>
            <div class="cap">${s.label}</div>
          </div>`)}
        </section>
        <div class="filters">
          <label class="query">${icon("search", 16)}<input aria-label="Search coupons by code" placeholder="Search coupons by code..." @input=${(e: Event) => (this.query = (e.target as HTMLInputElement).value)} /></label>
          <label class="pick"><select aria-label="Type"><option>All types</option><option>Percentage</option><option>Fixed Amount</option></select>${icon("down", 16)}</label>
          <label class="pick narrow"><select aria-label="Status"><option>All status</option><option>Active</option><option>Expired</option></select>${icon("down", 16)}</label>
        </div>
        <section class="panel" aria-label="Coupons">
          <div class="tools">
            <input class="inner" aria-label="Search in results" placeholder="Search in results..." />
            <button class="btn">${icon("columns", 16)}Columns</button>
          </div>
          <div class="sheet">
            <table>
              <colgroup><col class="c1" /><col class="c2" /><col class="c3" /><col class="c4" /><col class="c5" /><col class="c6" /><col class="c7" /><col /></colgroup>
              <thead><tr>
                <th><button>Code ${icon("sort", 16)}</button></th>
                <th><button>Type ${icon("sort", 16)}</button></th>
                <th>Discount</th><th>Usage</th><th>Min. Order</th><th>Validity</th><th>Status</th><th></th>
              </tr></thead>
              <tbody>${rows.map((c) => this.row(c))}</tbody>
            </table>
          </div>
          <div class="pager">
            <span>Showing 1 to 8 of 8 results</span><span class="push"></span>
            <button class="btn" disabled>Previous</button><button class="page" aria-current="page">1</button><button class="btn" disabled>Next</button>
          </div>
        </section>
      </main>
      <button class="chat" aria-label="Open chat">${icon("message", 24)}</button>`;
  }
}

/* ---------- dock ---------- */
const plate = (fill: string) => svg`<rect x=".5" y=".5" width="43" height="43" rx="10" fill=${fill} stroke="#fff" stroke-opacity=".35"/>`;
interface DockApp { name: string; running?: boolean; art: unknown; }
const calColors = ["#ff9f0a", "#ff4fa0", "#1fcf8a", "#c58cff", "#49b4ff", "#a9a9a9"];
const jet = (text: string) => svg`<rect x="7" y="8" width="30" height="29" fill="#050505"/><text x="10" y="22" fill="#fff" font-family="Open Sans, sans-serif" font-weight="700" font-size="14">${text}</text><rect x="10.5" y="31" width="11" height="2" fill="#fff"/>`;
const dockMain: DockApp[] = [
  { name: "Finder", running: true, art: svg`${plate("url(#finder)")}<path d="M25 4c-4 5-7 12-8 20 0 2 0 2 6 2-1 5-1 9 0 13.500h10a6 6 0 0 0 6-6V10a6 6 0 0 0-6-6z" fill="#dceeff" fill-opacity=".93"/><path d="M12 14v4M31 14v4" stroke="#123a63" stroke-width="2" stroke-linecap="round"/><path d="M9 29c7 7 18 7 25 0" stroke="#173a66" stroke-width="2" fill="none" stroke-linecap="round"/>` },
  { name: "Apps", art: svg`${plate("#f4f2f3")}<rect x="8" y="9" width="28" height="6" rx="3" fill="#a8a8a8"/><circle cx="12" cy="12" r="1.5" fill="none" stroke="#eee"/>${calColors.map((c, i) => svg`<rect x=${8 + (i % 3) * 10} y=${20 + Math.floor(i / 3) * 10} width="7" height="7" rx="2" fill=${c} />`)}` },
  { name: "App Store", art: svg`${plate("url(#store)")}<g stroke="#e4f1ff" stroke-width="3.5" stroke-linecap="round" fill="none"><path d="M20 9.5 33 34M24 9.5 11 34M7.5 27.5h29"/></g>` },
  { name: "Discord", running: true, art: svg`${plate("#646ff0")}<path d="M13 11c3-2 5-2 6-2l1 2h4l1-2c2 0 4 1 6 2 4 6 6 13 6 20-2 2-5 3-8 4l-2-4h-10l-2 4c-3-1-6-2-8-4 0-7 2-14 6-20z" fill="#fff"/><ellipse cx="16.5" cy="23.5" rx="2.8" ry="3.5" fill="#646ff0"/><ellipse cx="27.5" cy="23.5" rx="2.8" ry="3.5" fill="#646ff0"/><path d="M14 30c5 3 11 3 16 0" stroke="#646ff0" stroke-width="1.5" fill="none"/><circle cx="38" cy="5" r="10.5" fill="#f5383b"/><circle cx="38" cy="5.5" r="1.2" fill="#fff"/>` },
  { name: "Safari", running: true, art: svg`${plate("#fafafa")}<circle cx="22" cy="22" r="17.5" fill="url(#safari)"/><circle cx="22" cy="22" r="15.5" fill="none" stroke="#cfe9ff" stroke-width="2" stroke-dasharray=".8 2.2"/><path d="m33 10-8.5 14.5-5-5z" fill="#f23b36"/><path d="m11 34 8.5-14.5 5 5z" fill="#fff"/>` },
  { name: "PhpStorm", running: true, art: svg`${plate("url(#ps)")}<path d="M1 12C1 5 5 1 10 1h14L8 24z" fill="#ff318c"/>${jet("PS")}` },
  { name: "Arc", running: true, art: svg`${plate("#d8d8da")}<rect x="7" y="6" width="30" height="31" rx="5" fill="#1d1d20"/><path d="M13 31c5-2 5-17 9-17s4 15 9 17" stroke="url(#peak)" stroke-width="4" fill="none" stroke-linecap="round"/>` },
  { name: "Cursor", running: true, art: svg`${plate("#121212")}<path d="M22 6 36 14v16l-14 8L8 30V14z" fill="#6b6b6b"/><path d="M22 6 36 14H8z" fill="#8d8d8d"/><path d="M8 14h28L22 38V22z" fill="#ededed"/><path d="M8 14v16l14 8V22z" fill="#4a4a4a"/>` },
  { name: "VS Code", running: true, art: svg`${plate("#fff")}<path d="m29 7 8 4v22l-8 4z" fill="#1f9cf0"/><path d="M29 7v8L11 30l-4-3z" fill="#0065a9"/><path d="M29 37v-8L11 14l-4 3z" fill="#007acc"/>` },
  { name: "DataGrip", art: svg`${plate("url(#dg)")}<path d="M23 1h11c6 0 9 4 9 9v20z" fill="#a35cf5"/><path d="M37 8h5v26h-5z" fill="#d64fd9"/>${jet("DG")}` },
  { name: "Chrome", running: true, art: svg`${plate("#fff")}${["#ea2e22", "#fbc116", "#21a046"].map((c, i) => svg`<path d="M22 13.5h15.6A17.5 17.5 0 0 0 7 13l7.6 13.2A8.5 8.5 0 0 1 22 13.5Z" fill=${c} transform="rotate(${i * 120} 22 22)"/>`)}<circle cx="22" cy="22" r="8.7" fill="#fff"/><circle cx="22" cy="22" r="6.8" fill="#1a73e8"/>` },
  { name: "Teams", art: svg`${plate("#fff")}<circle cx="18.5" cy="10.5" r="5.5" fill="#7b8cf2"/><circle cx="31.5" cy="13" r="4.5" fill="#5c63dc"/><path d="M26 19h12v13c0 4-3 6-6 6h-6z" fill="#4a4fd0"/><path d="M10 18h17v13c0 10-17 10-17 0z" fill="#8592f5"/><rect x="5" y="22" width="15" height="15" rx="3" fill="#3a2fb0"/><text x="8.5" y="34" fill="#fff" font-family="Open Sans, sans-serif" font-weight="700" font-size="12">T</text>` },
  { name: "Notes", running: true, art: svg`${plate("#f5f4f2")}<path d="M1 11A10 10 0 0 1 11 1h22a10 10 0 0 1 10 10z" fill="#ffd02f"/><path d="M5 22h34M5 33h34" stroke="#cfcfcf"/>` },
  { name: "iPhone Mirroring", art: svg`${plate("url(#phone)")}<rect x="12" y="6" width="14" height="27" rx="3" fill="#1d2f58"/><rect x="19" y="11" width="14" height="27" rx="3" fill="#f1f0fa"/><g fill="#a9abc9"><rect x="21.5" y="14" width="3" height="3"/><rect x="26" y="14" width="3" height="3"/><rect x="21.5" y="19" width="3" height="3"/><rect x="26" y="19" width="3" height="3"/><rect x="21.5" y="33" width="9" height="3"/></g>` },
  { name: "QuickTime", running: true, art: svg`${plate("#f7f7f9")}<circle cx="22" cy="22" r="14" fill="none" stroke="url(#qt)" stroke-width="6"/><path d="m23 23 10 11" stroke="#1682ff" stroke-width="6" stroke-linecap="round"/><path d="M30 38h9V30z" fill="#1670f0"/>` },
  { name: "Claude", art: svg`${plate("#e0633f")}${burst("#fff", 14, 22, 22, 1, 16, 2.4)}` },
];
const dockRecent: DockApp[] = [
  { name: "Slack", running: true, art: svg`${plate("#fff")}<g><rect x="15" y="7" width="6" height="6" rx="3" fill="#36c5f0"/><rect x="7" y="14.5" width="14" height="6" rx="3" fill="#36c5f0"/><rect x="23.5" y="7" width="6" height="14" rx="3" fill="#2eb67d"/><rect x="31" y="14.5" width="6" height="6" rx="3" fill="#2eb67d"/><rect x="23.5" y="23" width="14" height="6" rx="3" fill="#ecb22e"/><rect x="23.5" y="31" width="6" height="6" rx="3" fill="#ecb22e"/><rect x="15" y="23" width="6" height="14" rx="3" fill="#e01e5a"/><rect x="7" y="23" width="6" height="6" rx="3" fill="#e01e5a"/></g>` },
  { name: "Docker", running: true, art: svg`${plate("#1d8ff0")}<path d="M7 21h24c1-2 1-4 0-6 2 1 3 2 4 4 2-.5 4 0 5 1-1 2-3 3-5 3-2 8-8 11-15 11-8 0-13-4-13-13z" fill="#fff"/><g fill="#fff"><rect x="10" y="16" width="4" height="4"/><rect x="15" y="16" width="4" height="4"/><rect x="20" y="16" width="4" height="4"/><rect x="25" y="16" width="4" height="4"/><rect x="15" y="11" width="4" height="4"/><rect x="20" y="11" width="4" height="4"/></g>` },
  { name: "Preview", running: true, art: svg`${plate("url(#lens)")}<path d="M14 22h16l5 10c-2 7-24 7-26 0z" fill="#c3dcff" fill-opacity=".75"/><ellipse cx="22" cy="31" rx="9" ry="4" fill="#e4f0ff"/><path d="M12 11h20v9c0 5-20 5-20 0z" fill="#16171a"/><ellipse cx="22" cy="11" rx="10" ry="5" fill="#3a3b3f"/><ellipse cx="22" cy="11" rx="5" ry="2.5" fill="#2a62a8"/>` },
];
const trash = svg`<path d="M6 5h32l-4 36a4 4 0 0 1-4 3H14a4 4 0 0 1-4-3z" fill="url(#bin)"/><path d="M6 6c2-6 6-7 9-5l4-2 5 3 5-3 4 3 4-1 1 5z" fill="#e8e8ea"/><path d="M16 5l3-5 5 4zM9 5l3-4 3 4z" fill="#9a9a9a"/><path d="M22 5l5-5 5 5z" fill="#2f9be8"/><path d="M16 5h5l3-3 4 3z" fill="#f0a020"/><path d="M33 5l4-4v4z" fill="#1f6fd0"/><path d="M6 6h32" stroke="#f4f4f4" stroke-width="2"/>`;

@customElement("mac-dock")
export class MacDock extends LitElement {
  static styles = css`
    :host { display: flex; align-items: flex-start; gap: 15px; height: 75px; padding: 14px 14px 0; border: 1px solid #d77cf2; border-radius: 24px; background: linear-gradient(100deg, #7a3cc8 0%, #8038dc 30%, #9c44e6 52%, #a83fe8 70%, #bb47ea 100%); }
    * { box-sizing: border-box; }
    button { position: relative; display: grid; justify-items: center; gap: 8px; padding: 0; border: 0; background: none; }
    svg { display: block; overflow: visible; }
    .run { width: 4px; height: 4px; border-radius: 1px; background: #1f1e58; }
    .rule { width: 1px; height: 54px; margin: -4px 6px 0; background: #7420ac; }
  `;
  private app(a: DockApp) {
    return html`<button aria-label=${a.name}><svg width="44" height="44" viewBox="0 0 44 44" aria-hidden="true">${this.defs()}${a.art}</svg>${a.running ? html`<span class="run"></span>` : nothing}</button>`;
  }
  private defs() {
    const lin = (id: string, ...stops: string[]) => svg`<linearGradient id=${id} x1="0" y1="0" x2="0" y2="1">${stops.map((s, i) => svg`<stop offset=${i / (stops.length - 1)} stop-color=${s} />`)}</linearGradient>`;
    return svg`<defs>
      ${lin("finder", "#12c2ff", "#0a78f5")}${lin("store", "#22a8fa", "#1a66ee")}${lin("safari", "#3fc0fa", "#2563e0")}
      ${lin("ps", "#b345f1", "#765af8")}${lin("peak", "#f4562e", "#f4562e", "#58b76a", "#3f7ff2", "#3f7ff2")}${lin("dg", "#22d88f", "#2fb89a", "#6a5cf0")}
      ${lin("phone", "#7fb6f8", "#7f6fee")}${lin("qt", "#12b8ff", "#1670f0")}${lin("lens", "#a9ccff", "#3f7df0")}${lin("bin", "#c9c9cd", "#bcbcc0", "#e0e0e2")}
    </defs>`;
  }
  render() {
    return html`${dockMain.map((a) => this.app(a))}<span class="rule"></span>${dockRecent.map((a) => this.app(a))}<span class="rule"></span>${this.app({ name: "Trash", art: trash })}`;
  }
}

/* ---------- desktop ---------- */
@customElement("app-root")
export class AppRoot extends LitElement {
  static styles = css`
    :host { display: block; }
    * { box-sizing: border-box; }
    .desktop { position: relative; display: flex; flex-direction: column; align-items: center; height: 100vh; padding: 3px 0 5px; overflow: hidden; background: #8a10c8; }
    .paper { position: absolute; inset: 0; width: 100%; height: 100%; }
    .window { position: relative; display: flex; flex-direction: column; flex: 1; min-height: 0; align-self: stretch; margin: 0 157px 3px 113px; border-radius: 16px; overflow: hidden; background: #070707; }
    .glow { position: relative; display: flex; flex: 1; min-height: 0; align-self: stretch; flex-direction: column; filter: drop-shadow(0 12px 18px rgba(0, 0, 0, 0.35)); }
    .app { display: flex; flex: 1; min-height: 0; }
    .scroll { flex: none; width: 15px; padding: 3px 3px 0 4px; background: #2c2c2c; border-left: 1px solid #3c3c3c; }
    .thumb { height: 63%; border-radius: 4px; background: #6b6b6b; }
    mac-dock { position: relative; margin-right: 71px; }
  `;
  render() {
    return html`<div class="desktop">
      <svg class="paper" viewBox="0 0 1568 1180" preserveAspectRatio="none" aria-hidden="true">
        <defs>
          <linearGradient id="l" x1="0" y1="0" x2="0" y2="1"><stop offset="0" stop-color="#d045a4"/><stop offset=".2" stop-color="#c83aa4"/><stop offset=".5" stop-color="#b324a6"/><stop offset="1" stop-color="#8a16b4"/></linearGradient>
          <linearGradient id="r" x1="0" y1="0" x2="0" y2="1"><stop offset="0" stop-color="#dca0c6"/><stop offset=".15" stop-color="#d489b6"/><stop offset=".4" stop-color="#d45f9c"/><stop offset=".5" stop-color="#cf4d94"/><stop offset=".65" stop-color="#c85aa6"/><stop offset=".8" stop-color="#c043b8"/><stop offset=".9" stop-color="#b42ccc"/><stop offset="1" stop-color="#a814dc"/></linearGradient>
          <linearGradient id="b" x1="0" y1="0" x2="1" y2="0"><stop offset="0" stop-color="#3c0cb0"/><stop offset=".3" stop-color="#4a10c0"/><stop offset=".6" stop-color="#8410c8"/><stop offset="1" stop-color="#9a0add"/></linearGradient>
          <linearGradient id="v" x1="0" y1="0" x2="0" y2="1"><stop offset="0" stop-color="#6a10cc"/><stop offset="1" stop-color="#3d0aa8"/></linearGradient>
        </defs>
        <rect width="800" height="1180" fill="url(#l)"/>
        <rect x="800" width="768" height="1180" fill="url(#r)"/>
        <rect x="180" width="860" height="4" fill="#b9a9c2"/>
        <path d="M0 225C40 260 70 330 110 420V700H0Z" fill="#b32aa6"/>
        <path d="M0 400C40 430 70 470 110 540V700H0Z" fill="#a01cb2"/>
        <path d="M0 648 110 668V1180H0Z" fill="url(#v)"/>
        <path d="M0 1028C80 1070 160 1100 260 1180H0Z" fill="#2d0b8a"/>
        <path d="M100 1100H1568V1180H200C170 1150 130 1130 100 1100Z" fill="url(#b)"/>
        <path d="M1420 1080H1568V1172C1500 1160 1470 1135 1420 1128C1370 1124 1350 1118 1330 1110Z" fill="#a917d8"/>
      </svg>
      <div class="glow"><div class="window">
        <browser-chrome></browser-chrome>
        <div class="app">
          <app-sidebar></app-sidebar>
          <coupons-page></coupons-page>
          <div class="scroll"><div class="thumb"></div></div>
        </div>
      </div></div>
      <mac-dock></mac-dock>
    </div>`;
  }
}
